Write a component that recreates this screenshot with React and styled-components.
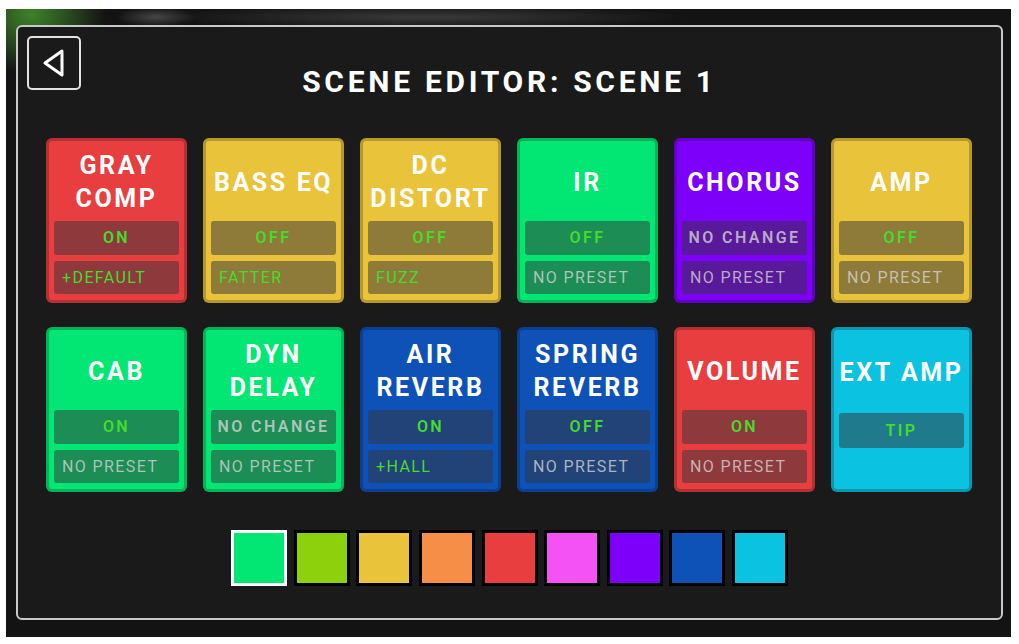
import React from "react";
import styled, { createGlobalStyle } from "styled-components";

const GlobalStyle = createGlobalStyle`
  html, body {
    margin: 0;
    padding: 0;
    background: #ffffff;
  }
  body {
    font-family: Roboto, "Liberation Sans", sans-serif;
  }
  * {
    box-sizing: border-box;
  }
`;

const ON_GREEN = "#46dc2c";
const DIM = "rgba(214, 214, 214, 0.78)";

const COLORS = {
  green: "#02e673",
  lime: "#8cd10b",
  yellow: "#e9c33a",
  orange: "#f78e47",
  red: "#e83e40",
  pink: "#f552f6",
  purple: "#7d00fb",
  blue: "#0e52b8",
  cyan: "#0bc2e1",
};

const blocks = [
  { name: ["GRAY", "COMP"], color: "red", state: "ON", preset: "+DEFAULT", presetOn: true },
  { name: ["BASS EQ"], color: "yellow", state: "OFF", preset: "FATTER", presetOn: true },
  { name: ["DC", "DISTORT"], color: "yellow", state: "OFF", preset: "FUZZ", presetOn: true },
  { name: ["IR"], color: "green", state: "OFF", preset: "NO PRESET" },
  { name: ["CHORUS"], color: "purple", state: "NO CHANGE", preset: "NO PRESET" },
  { name: ["AMP"], color: "yellow", state: "OFF", preset: "NO PRESET" },
  { name: ["CAB"], color: "green", state: "ON", preset: "NO PRESET" },
  { name: ["DYN", "DELAY"], color: "green", state: "NO CHANGE", preset: "NO PRESET" },
  { name: ["AIR", "REVERB"], color: "blue", state: "ON", preset: "+HALL", presetOn: true },
  { name: ["SPRING", "REVERB"], color: "blue", state: "OFF", preset: "NO PRESET" },
  { name: ["VOLUME"], color: "red", state: "ON", preset: "NO PRESET" },
  { name: ["EXT AMP"], color: "cyan", state: "TIP" },
];

const swatches = ["green", "lime", "yellow", "orange", "red", "pink", "purple", "blue", "cyan"];

const Frame = styled.div`
  margin: 9px 8px 7px 6px;
  height: 628px;
  padding: 16px 8px 17px 10px;
  background:
    radial-gradient(ellipse 75px 60px at 25px 5px, rgba(70, 150, 45, 0.85), transparent),
    radial-gradient(ellipse 260px 12px at 420px 8px, rgba(90, 90, 90, 0.55), transparent),
    radial-gradient(ellipse 40px 10px at 150px 8px, rgba(120, 120, 120, 0.5), transparent),
    #131313;
`;

const Panel = styled.div`
  height: 100%;
  border: 2px solid #c9c9c9;
  border-radius: 6px;
  background: #1a1a1a;
  padding: 9px 28px 0 28px;
  display: flex;
  flex-direction: column;
`;

const Header = styled.div`
  display: flex;
  align-items: flex-start;
  margin: 0 -19px;
`;

const BackButton = styled.button`
  flex: none;
  width: 54px;
  height: 54px;
  border: 2px solid #e2e2e2;
  border-radius: 5px;
  background: transparent;
  padding: 0;
  display: flex;
  align-items: center;
  justify-content: center;
`;

const Title = styled.h1`
  flex: 1;
  margin: 28px 54px 0 0;
  text-align: center;
  color: #ffffff;
  font-size: 30px;
  line-height: 36px;
  font-weight: 700;
  letter-spacing: 3.7px;
`;

const Grid = styled.div`
  margin-top: 38px;
  display: grid;
  grid-template-columns: repeat(6, 141px);
  grid-auto-rows: 165px;
  column-gap: 16px;
  row-gap: 24px;
`;

const Card = styled.div`
  background: ${(p) => COLORS[p.$color]};
  border: 3px solid rgba(0, 0, 0, 0.22);
  border-radius: 6px;
  padding: 0 5px 6px;
  display: flex;
  flex-direction: column;
  gap: 6px;
`;

const CardName = styled.div`
  height: 77px;
  padding-top: 8px;
  display: flex;
  flex-direction: column;
  align-items: center;
  justify-content: center;
  color: #ffffff;
  font-size: 25px;
  line-height: 33px;
  font-weight: 700;
  letter-spacing: 2.6px;
  white-space: nowrap;
`;

const Bar = styled.div`
  height: 35px;
  border-radius: 3px;
  background: rgba(52, 52, 56, 0.5);
  display: flex;
  align-items: center;
  white-space: nowrap;
  overflow: hidden;
  color: ${(p) => (p.$on ? ON_GREEN : DIM)};
`;

const StateBar = styled(Bar)`
  justify-content: center;
  font-size: 16px;
  font-weight: 600;
  letter-spacing: 2.4px;
`;

const PresetBar = styled(Bar)`
  padding-left: 8px;
  font-size: 16px;
  font-weight: 400;
  letter-spacing: 1.4px;
`;

const SwatchRow = styled.div`
  margin-top: 38px;
  display: flex;
  justify-content: center;
  gap: 6.6px;
`;

const Swatch = styled.div`
  width: 56px;
  height: 56px;
  background: ${(p) => COLORS[p.$color]};
  border: 3px solid ${(p) => (p.$selected ? "#ffffff" : "#000000")};
`;

const BackIcon = () => (
  <svg width="30" height="34" viewBox="0 0 30 34">
    <path d="M6 17 L23 5 L23 29 Z" fill="none" stroke="#ffffff" strokeWidth="3" strokeLinejoin="round" />
  </svg>
);

export default function App() {
  return (
    <>
      <GlobalStyle />
      <Frame>
        <Panel>
          <Header>
            <BackButton aria-label="Back">
              <BackIcon />
            </BackButton>
            <Title>SCENE EDITOR: SCENE 1</Title>
          </Header>
          <Grid>
            {blocks.map((b, i) => (
              <Card key={i} $color={b.color}>
                <CardName>
                  {b.name.map((line) => (
                    <span key={line}>{line}</span>
                  ))}
                </CardName>
                <StateBar $on={b.state !== "NO CHANGE"}>{b.state}</StateBar>
                {b.preset && <PresetBar $on={b.presetOn}>{b.preset}</PresetBar>}
              </Card>
            ))}
          </Grid>
          <SwatchRow>
            {swatches.map((c, i) => (
              <Swatch key={c} $color={c} $selected={i === 0} />
            ))}
          </SwatchRow>
        </Panel>
      </Frame>
    </>
  );
}
